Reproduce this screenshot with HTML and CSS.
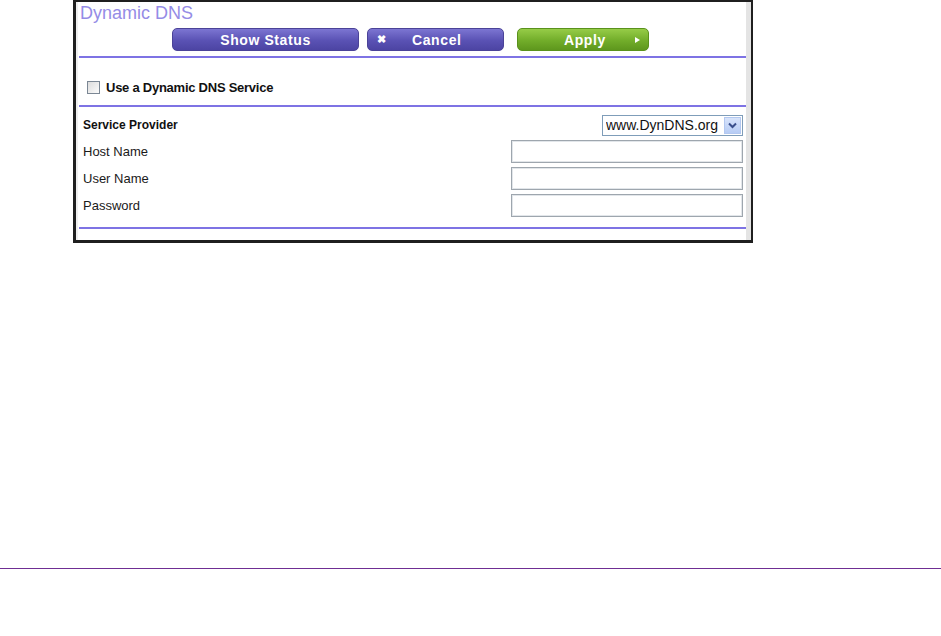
FILE: index.html
```html
<!DOCTYPE html>
<html lang="en">
<head>
    <meta charset="UTF-8">
    <title>Dynamic DNS</title>
    <link rel="stylesheet" href="styles.css">
</head>
<body>
    <div class="frame">
        <div class="panel">
            <h1 class="title">Dynamic DNS</h1>

            <div class="buttons">
                <button class="btn btn-purple btn-status">Show Status</button>
                <button class="btn btn-purple btn-cancel"><span class="x">&#x2716;</span><span>Cancel</span></button>
                <button class="btn btn-green btn-apply"><span>Apply</span><span class="tri"></span></button>
            </div>

            <div class="rule"></div>

            <div class="check-row">
                <span class="checkbox"></span>
                <label>Use a Dynamic DNS Service</label>
            </div>

            <div class="rule"></div>

            <div class="form">
                <div class="row">
                    <span class="label bold">Service Provider</span>
                    <div class="select-wrap">
                        <select>
                            <option>www.DynDNS.org</option>
                        </select>
                        <span class="arrow">
                            <svg width="9" height="7" viewBox="0 0 9 7"><path d="M1 1.5 L4.5 5 L8 1.5" fill="none" stroke="#3a4f8c" stroke-width="2"/></svg>
                        </span>
                    </div>
                </div>
                <div class="row">
                    <span class="label">Host Name</span>
                    <input type="text">
                </div>
                <div class="row">
                    <span class="label">User Name</span>
                    <input type="text">
                </div>
                <div class="row">
                    <span class="label">Password</span>
                    <input type="password">
                </div>
            </div>

            <div class="rule"></div>
        </div>
        <div class="strip"></div>
    </div>

    <div class="page-rule"></div>
</body>
</html>
```

FILE: styles.css
```css
body {
    margin: 0;
    background-color: white;
    font-family: "Liberation Sans", Arial, sans-serif;
}
.frame {
    box-sizing: border-box;
    margin-left: 73px;
    width: 680px;
    height: 243px;
    border: 3px solid #1f1f1f;
    border-top-width: 2px;
    border-right-width: 2px;
    display: flex;
    background-color: white;
}
.panel {
    flex: 1;
    border-left: 2px solid #eeeeee;
}
.strip {
    width: 5px;
    background-color: #e4e4e4;
}
.title {
    margin: 0;
    height: 26px;
    padding-left: 2px;
    font-size: 18px;
    font-weight: normal;
    line-height: 23px;
    color: #958ce6;
}
.buttons {
    display: flex;
    margin-left: 94px;
    height: 23px;
}
.btn {
    box-sizing: border-box;
    height: 23px;
    border-radius: 5px;
    color: white;
    font-family: "Liberation Sans", Arial, sans-serif;
    font-weight: bold;
    font-size: 14px;
    letter-spacing: 0.6px;
    padding: 0;
    display: flex;
    align-items: center;
    cursor: pointer;
}
.btn-purple {
    background: linear-gradient(#7c75d2, #5a52b4 55%, #4c44a3);
    border: 1px solid #4b4398;
}
.btn-green {
    background: linear-gradient(#96cc47, #72ad2a 55%, #5e971d);
    border: 1px solid #5a921c;
}
.btn-status {
    width: 187px;
    justify-content: center;
}
.btn-cancel {
    width: 137px;
    margin-left: 8px;
    padding-left: 9px;
}
.btn-cancel .x {
    font-size: 11px;
    letter-spacing: 0;
    margin-right: 26px;
}
.btn-apply {
    width: 132px;
    margin-left: 13px;
    padding-left: 46px;
}
.btn-apply .tri {
    margin-left: 29px;
    width: 0;
    height: 0;
    border-top: 3px solid transparent;
    border-bottom: 3px solid transparent;
    border-left: 5px solid white;
}
.rule {
    margin-left: 1px;
    height: 2px;
    background-color: #7e73e4;
}
.buttons + .rule {
    margin-top: 5px;
}
.check-row {
    height: 47px;
    box-sizing: border-box;
    padding-top: 12px;
    padding-left: 9px;
    display: flex;
    align-items: center;
    gap: 6px;
}
.checkbox {
    box-sizing: border-box;
    width: 13px;
    height: 13px;
    border: 1px solid #7b8794;
    background: linear-gradient(135deg, #dcdcdc, #fbfbfb);
}
.check-row label {
    font-size: 13px;
    font-weight: bold;
    letter-spacing: -0.25px;
    color: #111;
}
.form {
    padding: 4px 3px 8px 5px;
}
.row {
    height: 27px;
    display: flex;
    align-items: center;
    justify-content: space-between;
}
.label {
    font-size: 13px;
    color: #1a1a1a;
}
.label.bold {
    font-size: 12px;
    font-weight: bold;
    color: #111;
}
.row input {
    box-sizing: border-box;
    width: 232px;
    height: 23px;
    border: 1px solid #9ea6ae;
    box-shadow: inset 0 0 0 1px #e2e6ea;
    background-color: white;
    margin: 0;
}
.select-wrap {
    position: relative;
    margin-top: 1px;
}
.select-wrap select {
    -webkit-appearance: none;
    appearance: none;
    box-sizing: border-box;
    width: 141px;
    height: 21px;
    border: 1px solid #7f9db9;
    background-color: white;
    font-family: "Liberation Sans", Arial, sans-serif;
    font-size: 14px;
    color: #111;
    padding: 0 0 0 3px;
    margin: 0;
}
.select-wrap .arrow {
    position: absolute;
    right: 2px;
    top: 2px;
    width: 17px;
    height: 17px;
    box-sizing: border-box;
    border: 1px solid #b3c8f0;
    background: linear-gradient(#d8e4fb, #b7ccf5);
    display: flex;
    align-items: center;
    justify-content: center;
}
.page-rule {
    margin-top: 325px;
    height: 1px;
    background-color: #6f2e93;
}
```
